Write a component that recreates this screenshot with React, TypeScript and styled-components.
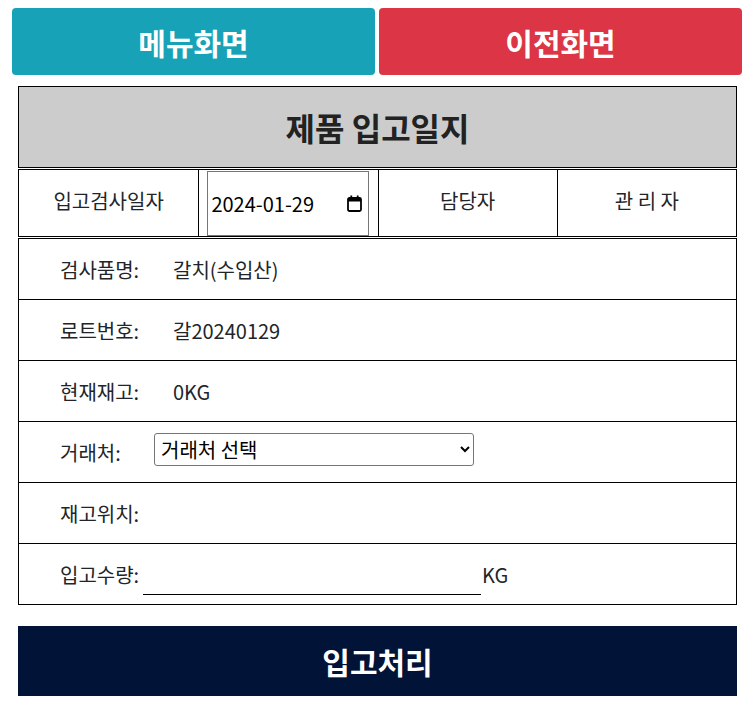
import React from "react";
import styled, { createGlobalStyle } from "styled-components";

const GlobalStyle = createGlobalStyle`
  body {
    margin: 0;
    background: #fff;
    color: #212529;
    font-family: "Noto Sans CJK KR", "Noto Sans", sans-serif;
  }
`;

const Page = styled.div`
  width: 755px;
  padding-top: 8px;
`;

const TopBar = styled.div`
  display: flex;
  gap: 4px;
  padding: 0 13px 0 12px;
`;

const NavButton = styled.button<{ $color: string }>`
  flex: 1;
  height: 67px;
  border: none;
  border-radius: 4px;
  background: ${(p) => p.$color};
  color: #fff;
  font-family: inherit;
  font-size: 30px;
  font-weight: 700;
  cursor: pointer;
`;

const Sheet = styled.div`
  margin: 11px 18px 0 18px;
  display: flex;
  flex-direction: column;
`;

const TitleBox = styled.div`
  height: 80px;
  border: 1px solid #000;
  background: #ccc;
  display: flex;
  align-items: center;
  justify-content: center;
  font-size: 32px;
  font-weight: 700;
  color: #222;
`;

const HeadGrid = styled.div`
  margin-top: 1px;
  display: grid;
  grid-template-columns: repeat(4, 1fr);
  border: 1px solid #000;
  height: 66px;
`;

const HeadCell = styled.div`
  display: flex;
  align-items: center;
  justify-content: center;
  padding-bottom: 6px;
  font-size: 20px;
  border-left: 1px solid #000;
  &:first-child {
    border-left: none;
  }
`;

const DateCell = styled(HeadCell)`
  padding-bottom: 0;
`;

const DateField = styled.label`
  box-sizing: border-box;
  width: 162px;
  height: 65px;
  margin-top: 1px;
  padding: 0 6px 0 3px;
  border: 1px solid #767676;
  display: flex;
  align-items: center;
  background: #fff;
`;

const DateText = styled.input`
  flex: 1;
  min-width: 0;
  border: none;
  padding: 0;
  outline: none;
  font-family: inherit;
  font-size: 20px;
  color: #000;
  background: transparent;
`;

const CalendarIcon = () => (
  <svg width="15" height="17" viewBox="0 0 15 17" aria-hidden="true">
    <rect x="1" y="3" width="13" height="13" rx="1.5" fill="none" stroke="#000" strokeWidth="1.8" />
    <rect x="1" y="3" width="13" height="3.5" fill="#000" />
    <rect x="3.4" y="0.5" width="1.8" height="3" fill="#000" />
    <rect x="9.8" y="0.5" width="1.8" height="3" fill="#000" />
  </svg>
);

const InfoTable = styled.div`
  margin-top: 1px;
  border: 1px solid #000;
  display: flex;
  flex-direction: column;
`;

const InfoRow = styled.div`
  height: 60px;
  display: flex;
  align-items: center;
  padding-left: 41px;
  font-size: 20px;
  border-top: 1px solid #000;
  &:first-child {
    border-top: none;
  }
`;

const Label = styled.span<{ $width: number }>`
  width: ${(p) => p.$width}px;
  flex-shrink: 0;
`;

const Value = styled.span``;

const Select = styled.select`
  width: 320px;
  height: 33px;
  margin-bottom: 6px;
  border: 1px solid #767676;
  border-radius: 3px;
  font-family: inherit;
  font-size: 20px;
  color: #000;
  background: #fff;
  padding: 0 2px;
`;

const QtyInput = styled.input`
  box-sizing: border-box;
  width: 338px;
  height: 34px;
  margin-top: 8px;
  border: none;
  border-bottom: 1px solid #000;
  font-family: inherit;
  font-size: 20px;
  outline: none;
`;

const Unit = styled.span`
  margin-left: 1px;
`;

const SubmitButton = styled.button`
  margin-top: 21px;
  height: 70px;
  border: none;
  background: #011337;
  color: #fff;
  font-family: inherit;
  font-size: 30px;
  font-weight: 700;
  cursor: pointer;
`;

export default function App() {
  return (
    <Page>
      <GlobalStyle />
      <TopBar>
        <NavButton $color="#17a2b8">메뉴화면</NavButton>
        <NavButton $color="#dc3545">이전화면</NavButton>
      </TopBar>

      <Sheet>
        <TitleBox>제품 입고일지</TitleBox>

        <HeadGrid>
          <HeadCell>입고검사일자</HeadCell>
          <DateCell>
            <DateField>
              <DateText type="text" defaultValue="2024-01-29" />
              <CalendarIcon />
            </DateField>
          </DateCell>
          <HeadCell>담당자</HeadCell>
          <HeadCell>관 리 자</HeadCell>
        </HeadGrid>

        <InfoTable>
          <InfoRow>
            <Label $width={113}>검사품명:</Label>
            <Value>갈치(수입산)</Value>
          </InfoRow>
          <InfoRow>
            <Label $width={113}>로트번호:</Label>
            <Value>갈20240129</Value>
          </InfoRow>
          <InfoRow>
            <Label $width={113}>현재재고:</Label>
            <Value>0KG</Value>
          </InfoRow>
          <InfoRow>
            <Label $width={94}>거래처:</Label>
            <Select defaultValue="">
              <option value="">거래처 선택</option>
            </Select>
          </InfoRow>
          <InfoRow>
            <Label $width={113}>재고위치:</Label>
          </InfoRow>
          <InfoRow>
            <Label $width={83}>입고수량:</Label>
            <QtyInput type="text" />
            <Unit>KG</Unit>
          </InfoRow>
        </InfoTable>

        <SubmitButton>입고처리</SubmitButton>
      </Sheet>
    </Page>
  );
}
